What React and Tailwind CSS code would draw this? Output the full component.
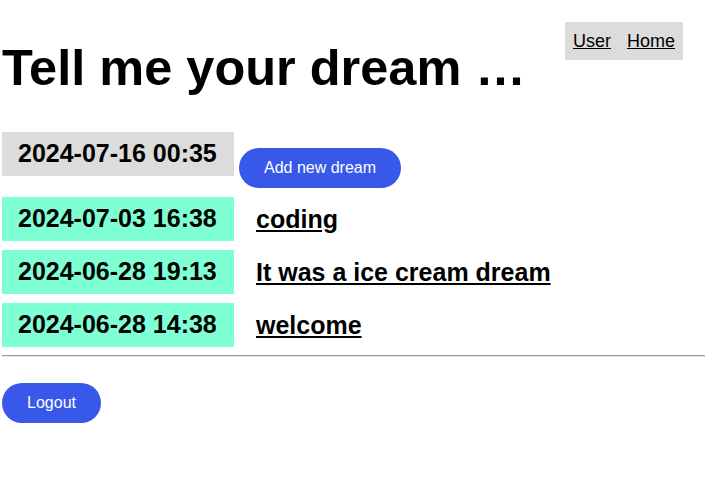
const DREAMS = [
  { id: 1, date: "2024-07-03 16:38", title: "coding" },
  { id: 2, date: "2024-06-28 19:13", title: "It was a ice cream dream" },
  { id: 3, date: "2024-06-28 14:38", title: "welcome" },
];

export default function App() {
  return (
    <div className="min-h-[495px] bg-white pl-[2px] font-['Liberation_Sans',Arial,sans-serif] text-black">
      <header className="flex items-start justify-between pr-[22px]">
        <h1 className="mt-[40px] text-[50.5px] font-bold leading-[56px]">Tell me your dream …</h1>
        <nav className="mt-[22px] flex h-[38px] items-center gap-4 bg-[#dcdcdc] px-2 text-[18px]">
          <a href="#" className="underline">User</a>
          <a href="#" className="underline">Home</a>
        </nav>
      </header>

      <div className="mt-[36px] flex items-start">
        <div className="flex h-[44px] w-[232px] items-center bg-[#dcdcdc] pl-4 text-[25px] font-bold">
          2024-07-16 00:35
        </div>
        <button className="ml-[5px] mt-[16px] h-[40px] w-[162px] rounded-full bg-[#3858e9] text-[16px] text-white">
          Add new dream
        </button>
      </div>

      <div className="mt-[9px] flex flex-col gap-[9px]">
        {DREAMS.map((d) => (
          <div key={d.id} className="flex items-center">
            <div className="flex h-[44px] w-[232px] items-center bg-[#7fffd4] pl-4 text-[25px] font-bold">
              {d.date}
            </div>
            <a href="#" className="ml-[22px] pt-[2px] text-[25px] font-bold underline">
              {d.title}
            </a>
          </div>
        ))}
      </div>

      <hr className="mt-[8px] border-0 border-t border-b border-t-[#9a9a9a] border-b-[#e6e6e6]" />

      <button className="mt-[26px] h-[40px] w-[99px] rounded-full bg-[#3858e9] text-[16px] text-white">
        Logout
      </button>
    </div>
  );
}
